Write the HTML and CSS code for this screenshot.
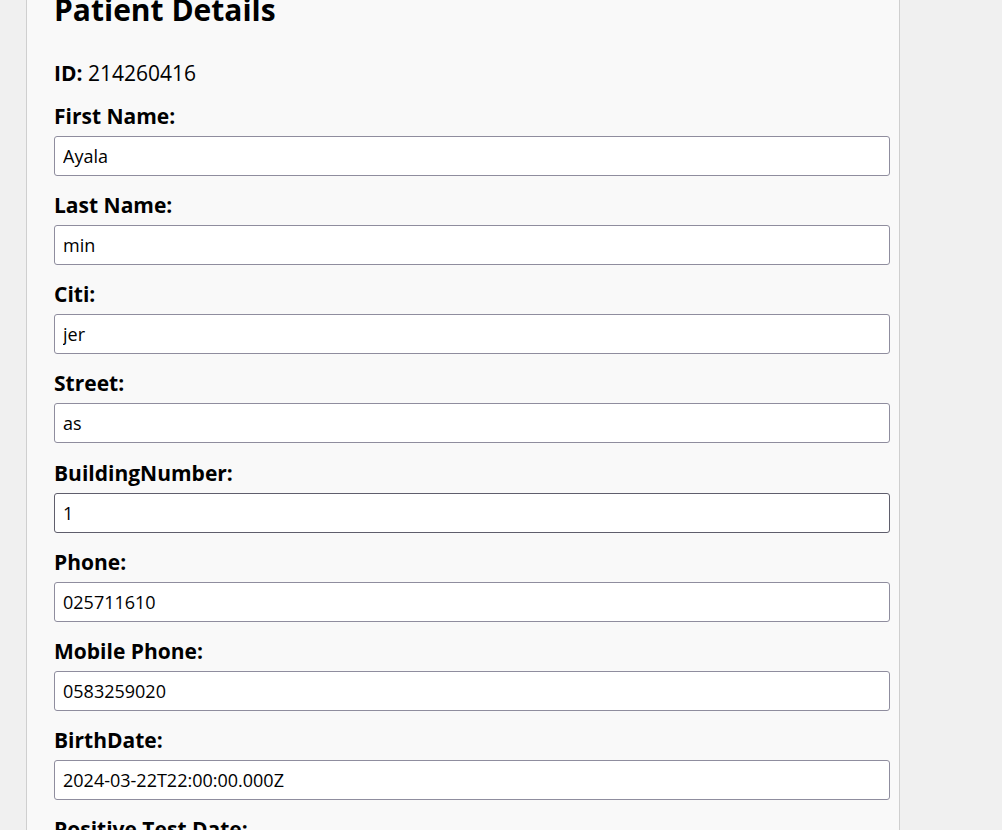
FILE: index.html
```html
<!DOCTYPE html>
<html lang="en">
<head>
<meta charset="utf-8">
<title>Patient Details</title>
<link rel="stylesheet" href="styles.css">
</head>
<body>
<div class="card">
  <h1 class="title">Patient Details</h1>
  <p class="id-line"><strong>ID:</strong> 214260416</p>
  <div class="field">
    <label class="label">First Name:</label>
    <input class="input" type="text" value="Ayala">
  </div>
  <div class="field">
    <label class="label">Last Name:</label>
    <input class="input" type="text" value="min">
  </div>
  <div class="field">
    <label class="label">Citi:</label>
    <input class="input" type="text" value="jer">
  </div>
  <div class="field">
    <label class="label">Street:</label>
    <input class="input" type="text" value="as">
  </div>
  <div class="field">
    <label class="label">BuildingNumber:</label>
    <input class="input input-hover" type="text" value="1">
  </div>
  <div class="field">
    <label class="label">Phone:</label>
    <input class="input" type="text" value="025711610">
  </div>
  <div class="field">
    <label class="label">Mobile Phone:</label>
    <input class="input" type="text" value="0583259020">
  </div>
  <div class="field">
    <label class="label">BirthDate:</label>
    <input class="input" type="text" value="2024-03-22T22:00:00.000Z">
  </div>
  <div class="field">
    <label class="label">Positive Test Date:</label>
    <input class="input" type="text" value="2024-03-22T22:00:00.000Z">
  </div>
  <div class="field">
    <label class="label">Recovery Date:</label>
    <input class="input" type="text" value="2024-03-22T22:00:00.000Z">
  </div>
</div>
</body>
</html>
```
FILE: styles.css
```css
html {
  overflow: hidden;
  background: #f0f0f0;
}
body {
  margin: 0;
  background: #f0f0f0;
  font-family: "Open Sans", "Noto Sans", sans-serif;
  color: #000;
}
.card {
  margin: -11px 0 0 26px;
  width: 836px;
  padding: 0 9px 40px 27px;
  background: #f9f9f9;
  border: 1px solid #cfcfcf;
}
.title {
  margin: 0 0 31px;
  font-size: 30px;
  line-height: 40px;
  font-weight: 700;
}
.id-line {
  margin: 0 0 18px;
  font-size: 21px;
  line-height: 24px;
}
.id-line strong {
  font-weight: 700;
}
.field {
  display: flex;
  flex-direction: column;
}
.label {
  display: block;
  margin: 1px 0 8px;
  font-size: 21px;
  line-height: 24px;
  font-weight: 700;
}
.input {
  box-sizing: border-box;
  width: 100%;
  height: 40px;
  margin: 0 0 16.15px;
  padding: 0 8px;
  border: 1px solid #8f8d9e;
  border-radius: 3px;
  background: #fff;
  font-family: "Open Sans", "Noto Sans", sans-serif;
  font-size: 18px;
  color: #000;
}
.input-hover {
  border-color: #5f5e6c;
}
```
